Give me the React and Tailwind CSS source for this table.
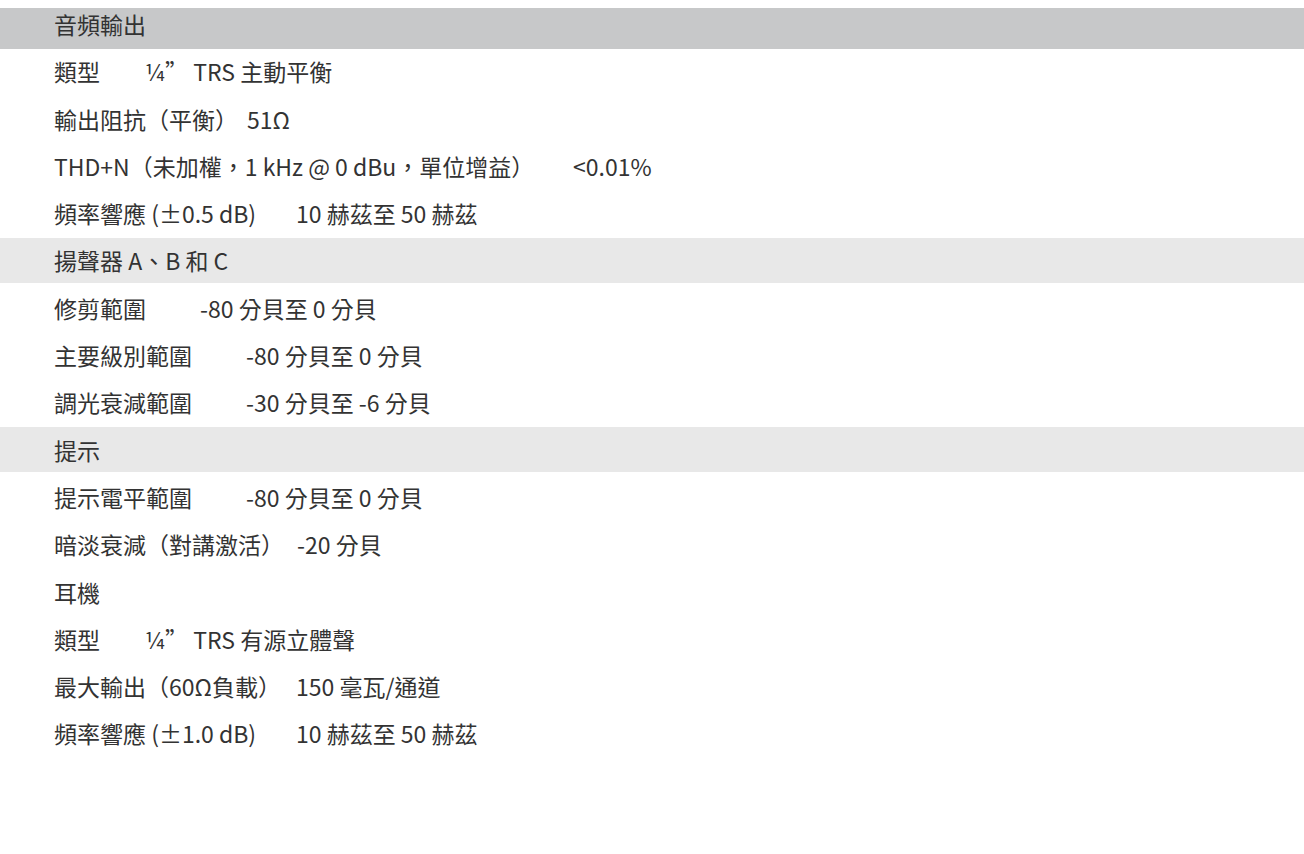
import React from "react";

// spec rows; labelW keeps the value starting where it does in the sheet
const rows = [
  { kind: "row", label: "類型", value: "¼” TRS 主動平衡", labelW: "min-w-[91px]" },
  { kind: "row", label: "輸出阻抗（平衡）", value: "51Ω", labelW: "min-w-[193px]" },
  { kind: "row", label: "THD+N（未加權，1 kHz @ 0 dBu，單位增益）", value: "<0.01%", labelW: "min-w-[519px]" },
  { kind: "row", label: "頻率響應 (±0.5 dB)", value: "10 赫茲至 50 赫茲", labelW: "min-w-[242px]" },
  { kind: "head", label: "揚聲器 A、B 和 C" },
  { kind: "row", label: "修剪範圍", value: "-80 分貝至 0 分貝", labelW: "min-w-[146px]" },
  { kind: "row", label: "主要級別範圍", value: "-80 分貝至 0 分貝", labelW: "min-w-[192px]" },
  { kind: "row", label: "調光衰減範圍", value: "-30 分貝至 -6 分貝", labelW: "min-w-[192px]" },
  { kind: "head", label: "提示" },
  { kind: "row", label: "提示電平範圍", value: "-80 分貝至 0 分貝", labelW: "min-w-[192px]" },
  { kind: "row", label: "暗淡衰減（對講激活）", value: "-20 分貝", labelW: "min-w-[243px]" },
  { kind: "plain", label: "耳機" },
  { kind: "row", label: "類型", value: "¼” TRS 有源立體聲", labelW: "min-w-[91px]" },
  { kind: "row", label: "最大輸出（60Ω負載）", value: "150 毫瓦/通道", labelW: "min-w-[242px]" },
  { kind: "row", label: "頻率響應 (±1.0 dB)", value: "10 赫茲至 50 赫茲", labelW: "min-w-[242px]" },
];

function Row({ row }) {
  if (row.kind === "head") {
    return (
      <div className="h-[45px] flex items-center bg-[#e8e8e8] pl-[54px]">
        <span>{row.label}</span>
      </div>
    );
  }
  if (row.kind === "plain") {
    return (
      <div className="h-[45px] flex items-center pl-[54px]">
        <span>{row.label}</span>
      </div>
    );
  }
  return (
    <div className="h-[45px] flex items-center pl-[54px] whitespace-nowrap">
      <span className={row.labelW}>{row.label}</span>
      <span>{row.value}</span>
    </div>
  );
}

export default function App() {
  return (
    <div
      className="w-[1304px] h-[854px] bg-white text-[#333333] text-[23px] pt-[8px] overflow-hidden"
      style={{ fontFamily: '"Noto Sans CJK TC", "Noto Sans", sans-serif' }}
    >
      <div className="h-[41px] flex items-center bg-[#c7c8c9] pl-[54px] pb-[8px]">
        <span>音頻輸出</span>
      </div>
      <div className="flex flex-col gap-[2.3px]">
        {rows.map((row, i) => (
          <Row key={i} row={row} />
        ))}
      </div>
    </div>
  );
}
